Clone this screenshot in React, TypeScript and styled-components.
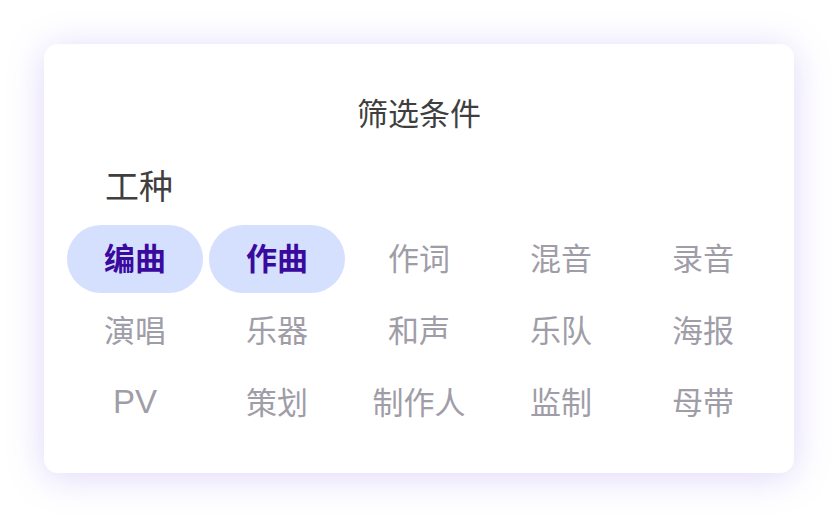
import React from "react";
import styled, { createGlobalStyle } from "styled-components";

const Global = createGlobalStyle`
  html, body { margin: 0; padding: 0; background: #ffffff; }
  body { font-family: "Liberation Sans", "Noto Sans CJK SC", sans-serif; }
`;

const Page = styled.div`
  width: 838px;
  height: 529px;
  padding: 44px 44px 0 44px;
  box-sizing: border-box;
`;

const Card = styled.div`
  width: 750px;
  height: 429px;
  box-sizing: border-box;
  background: #ffffff;
  border-radius: 14px;
  box-shadow: 0 4px 36px rgba(140, 110, 235, 0.28);
  padding: 51px 23px 0 23px;
  display: flex;
  flex-direction: column;
`;

const Title = styled.div`
  font-size: 31px;
  line-height: 40px;
  height: 40px;
  color: #3f3f3f;
  text-align: center;
`;

const Section = styled.div`
  margin-top: 30px;
  padding-left: 38px;
  font-size: 34px;
  line-height: 44px;
  height: 44px;
  color: #3f3f3f;
`;

const Grid = styled.div`
  margin-top: 16px;
  display: grid;
  grid-template-columns: repeat(5, 136px);
  grid-auto-rows: 68px;
  column-gap: 6px;
  row-gap: 4px;
`;

const Chip = styled.div<{ $active: boolean; $latin: boolean }>`
  display: flex;
  align-items: center;
  justify-content: center;
  box-sizing: border-box;
  padding-bottom: ${(p) => (p.$latin ? "2px" : "5px")};
  border-radius: 34px;
  font-size: ${(p) => (p.$latin ? "33px" : "31px")};
  background: ${(p) => (p.$active ? "#d5e0ff" : "transparent")};
  color: ${(p) => (p.$active ? "#3a0a9e" : "#9f9da7")};
  font-weight: ${(p) => (p.$active ? 700 : 400)};
`;

const items = [
  "编曲", "作曲", "作词", "混音", "录音",
  "演唱", "乐器", "和声", "乐队", "海报",
  "PV", "策划", "制作人", "监制", "母带",
];
const selected = new Set(["编曲", "作曲"]);

export default function App() {
  return (
    <>
      <Global />
      <Page>
        <Card>
          <Title>筛选条件</Title>
          <Section>工种</Section>
          <Grid>
            {items.map((t) => (
              <Chip key={t} $active={selected.has(t)} $latin={/^[A-Za-z]+$/.test(t)}>
                {t}
              </Chip>
            ))}
          </Grid>
        </Card>
      </Page>
    </>
  );
}
